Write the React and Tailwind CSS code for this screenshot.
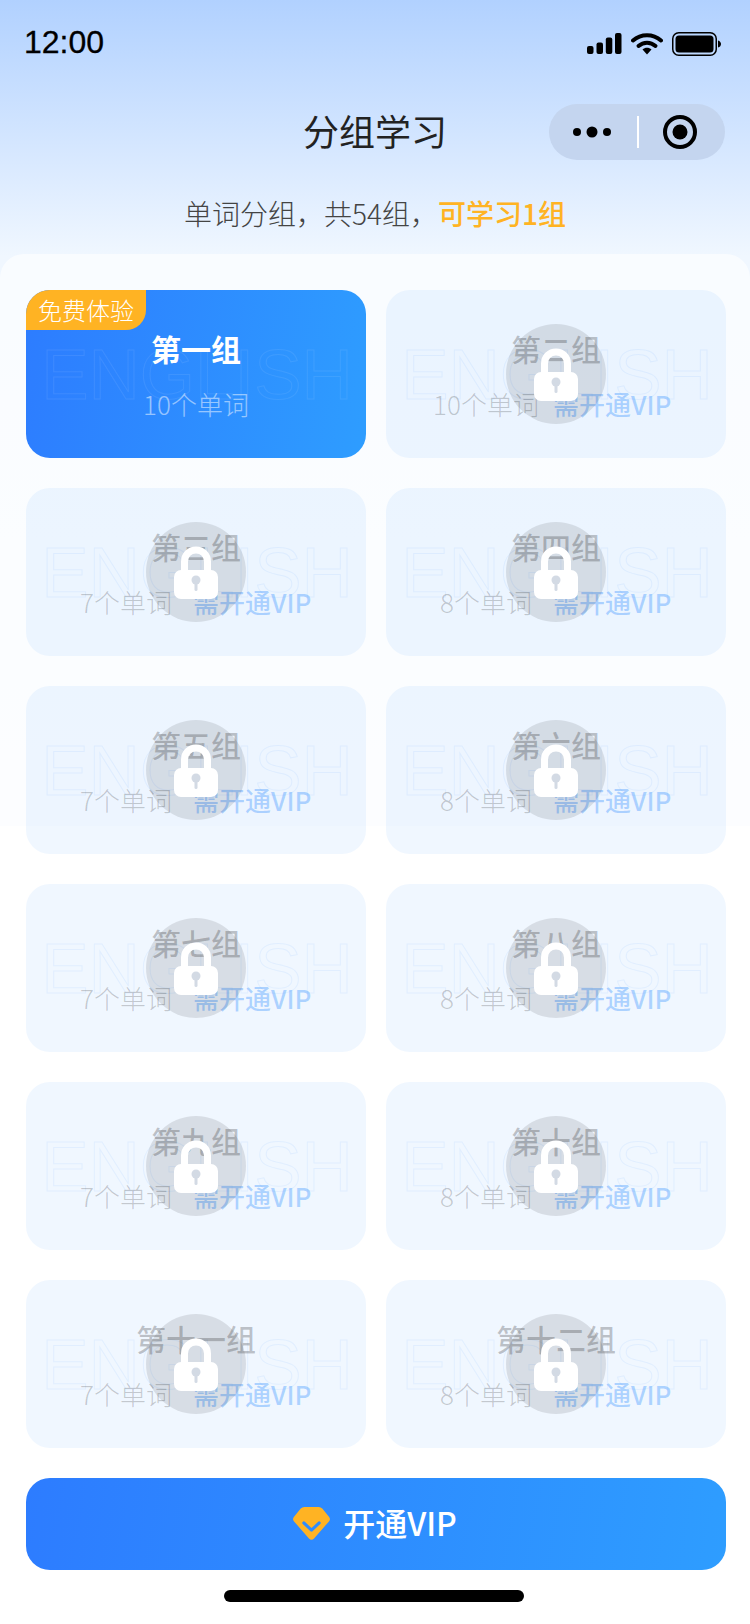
const groups = [
  ['第二组', '10个单词'], ['第三组', '7个单词'], ['第四组', '8个单词'], ['第五组', '7个单词'], ['第六组', '8个单词'],
  ['第七组', '7个单词'], ['第八组', '8个单词'], ['第九组', '7个单词'], ['第十组', '8个单词'], ['第十一组', '7个单词'], ['第十二组', '8个单词'],
];

function Lock() {
  return (
    <svg width="44" height="54" viewBox="0 0 44 54" className="absolute left-[148px] top-[58px]">
      <path d="M10.5 28V15.500C10.500 9 15.500 4 22 4s11.500 5 11.500 11.500V28" fill="none" stroke="#fff" strokeWidth="7" />
      <rect x="0" y="24" width="44" height="29" rx="7" fill="#fff" />
      <circle cx="22" cy="34" r="4.500" fill="#d3dae4" />
      <rect x="20.500" y="34" width="3" height="11" rx="1.500" fill="#d3dae4" />
    </svg>
  );
}

function English({ className }) {
  return (
    <div className={`absolute inset-x-0 top-[43px] pl-[2px] text-center font-['Liberation_Sans',sans-serif] text-[71px] leading-[84px] text-transparent select-none ${className}`}>
      ENGLISH
    </div>
  );
}

function LockedCard({ title, count }) {
  return (
    <div className="relative h-[168px] rounded-[24px] bg-[#2d8cff]/[0.07] overflow-hidden">
      <English className="[-webkit-text-stroke:1px_rgba(45,140,255,0.08)]" />
      <div className="relative pt-[37px] text-center text-[30px] leading-[42px] font-medium text-black/[0.22]">{title}</div>
      <div className="relative mt-[17px] flex pl-[40px] text-[26px] leading-[36px]">
        <span className="w-[120px] text-center font-light text-black/20">{count}</span>
        <span className="ml-[7px] font-medium text-[#2d8cff]/35">需开通VIP</span>
      </div>
      <div className="absolute left-[120px] top-[34px] h-[100px] w-[100px] rounded-full bg-black/10" />
      <Lock />
    </div>
  );
}

export default function App() {
  return (
    <div className="relative h-[1624px] w-[750px] overflow-hidden bg-white font-['Noto_Sans_CJK_SC',sans-serif]">
      <div className="absolute inset-x-0 top-0 h-[826px] bg-[linear-gradient(180deg,#b1d1ff_0%,#f0f7ff_31%,#f8fbff_100%)]" />

      <div className="relative">
        <div className="flex h-[88px] items-start justify-between pl-[24px] pr-[29px] pt-[22px]">
          <span className="font-['Liberation_Sans',sans-serif] text-[32px] leading-[40px] text-black [-webkit-text-stroke:0.3px_#000]">12:00</span>
          <div className="mt-[10px] flex items-center">
            <svg width="35" height="22" viewBox="0 0 35 22">
              <rect x="0" y="13" width="6.500" height="8" rx="2" fill="#000" />
              <rect x="9.500" y="9.500" width="6.500" height="11.500" rx="2" fill="#000" />
              <rect x="18.800" y="4.500" width="6.500" height="16.500" rx="2" fill="#000" />
              <rect x="28" y="0" width="6.500" height="21" rx="2" fill="#000" />
            </svg>
            <svg width="32" height="22" viewBox="0 0 32 22" className="ml-[9px]">
              <path d="M2 7.500C10 0.500 22 0.500 30 7.500" fill="none" stroke="#000" strokeWidth="4" strokeLinecap="round" />
              <path d="M7.500 13C12.500 8.500 19.500 8.500 24.500 13" fill="none" stroke="#000" strokeWidth="4" strokeLinecap="round" />
              <path d="M11.500 16.500C14 14 18 14 20.500 16.500L16 21.500Z" fill="#000" />
            </svg>
            <svg width="49" height="24" viewBox="0 0 49 24" className="ml-[9px]">
              <rect x="0.750" y="0.750" width="43.500" height="22.500" rx="6" fill="none" stroke="#000" strokeWidth="1.500" />
              <rect x="3.500" y="3.500" width="38" height="17" rx="3.500" fill="#000" />
              <path d="M46 8.500c2 .5 3 2 3 3.500s-1 3-3 3.500Z" fill="#000" />
            </svg>
          </div>
        </div>

        <div className="relative flex h-[88px] items-center justify-center pb-[4px]">
          <span className="text-[36px] leading-[50px] font-normal text-[#222]">分组学习</span>
          <div className="absolute left-[549px] top-[16px] flex h-[56px] w-[176px] items-center rounded-full bg-[#c4d5ef]">
            <svg width="40" height="14" viewBox="0 0 40 14" className="ml-[23px]">
              <circle cx="5" cy="7" r="4" fill="#000" />
              <circle cx="20" cy="7" r="5.500" fill="#000" />
              <circle cx="35" cy="7" r="4" fill="#000" />
            </svg>
            <div className="ml-[25px] h-[32px] w-[2px] bg-white" />
            <svg width="34" height="34" viewBox="0 0 34 34" className="ml-[24px]">
              <circle cx="17" cy="17" r="15" fill="none" stroke="#000" strokeWidth="4" />
              <circle cx="17" cy="17" r="7.500" fill="#000" />
            </svg>
          </div>
        </div>

        <div className="flex h-[78px] items-start justify-center pt-[17px] text-[28px] leading-[40px] font-light text-[#444]">
          <span>单词分组，共54组，</span>
          <span className="font-medium text-[#ffb323]">可学习1组</span>
        </div>

        <div className="h-[1370px] rounded-t-[24px] bg-white/60 pl-[26px] pr-[24px] pt-[36px]">
          <div className="grid grid-cols-2 gap-x-[20px] gap-y-[30px]">
            <div className="relative h-[168px] overflow-hidden rounded-[24px] bg-[linear-gradient(100deg,#2d7cff,#2e9dff)]">
              <English className="[-webkit-text-stroke:1px_rgba(255,255,255,0.08)]" />
              <div className="absolute left-0 top-0 flex h-[40px] w-[120px] items-center justify-center rounded-br-[20px] bg-[#ffb323] text-[24px] leading-[34px] font-light text-white">免费体验</div>
              <div className="relative pt-[37px] text-center text-[30px] leading-[42px] font-bold text-white">第一组</div>
              <div className="relative mt-[17px] text-center text-[26px] leading-[36px] font-light text-white/50">10个单词</div>
            </div>
            {groups.map(([t, c]) => (
              <LockedCard key={t} title={t} count={c} />
            ))}
          </div>

          <div className="mt-[30px] flex h-[92px] items-center justify-center rounded-[24px] bg-[linear-gradient(100deg,#2d7cff,#2e9dff)]">
            <svg width="39" height="35" viewBox="0 0 38 34" className="-ml-[3px] mt-[-1px]">
              <path d="M12 1H26Q28 1 29.500 2.500L36 10.500Q38 13 36 15L21.500 31.500Q19 34 16.500 31.500L2 15Q0 13 2 10.500L8.500 2.500Q10 1 12 1Z" fill="#ffb323" />
              <path d="M11.500 16.500L19 23.500L26.500 16.500" fill="none" stroke="#2d8cff" strokeWidth="3" strokeLinecap="round" strokeLinejoin="round" />
            </svg>
            <span className="ml-[12px] mt-[-4px] text-[32px] leading-[44px] font-medium text-white">开通VIP</span>
          </div>

          <div className="ml-[198px] mt-[20px] h-[12px] w-[300px] rounded-full bg-black" />
        </div>
      </div>
    </div>
  );
}
